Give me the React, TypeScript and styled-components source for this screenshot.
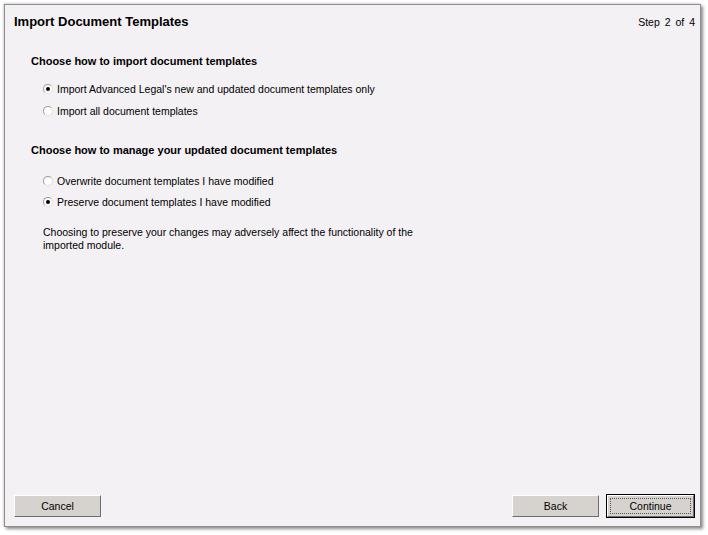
import React from 'react';
import styled, { createGlobalStyle } from 'styled-components';

const GlobalStyle = createGlobalStyle`
  html, body {
    margin: 0;
    padding: 0;
    background: #ffffff;
  }
  body {
    font-family: Tahoma, "Liberation Sans", "DejaVu Sans", sans-serif;
    font-size: 10.5px;
    color: #000000;
  }
`;

const Desktop = styled.div`
  width: 708px;
  height: 535px;
  padding: 4px 7px 8px 4px;
  box-sizing: border-box;
  background: #ffffff;
`;

const Window = styled.div`
  height: 100%;
  box-sizing: border-box;
  display: flex;
  flex-direction: column;
  background: #f4f1f4;
  border: 1px solid #8e8e8e;
  box-shadow: 2px 2px 3px rgba(0, 0, 0, 0.45), -1px -1px 2px rgba(0, 0, 0, 0.15);
`;

const Header = styled.div`
  display: flex;
  justify-content: space-between;
  align-items: flex-start;
  padding: 8px 5px 0 9px;
`;

const Title = styled.h1`
  margin: 0;
  font-size: 13px;
  font-weight: bold;
  line-height: 18px;
`;

const Step = styled.div`
  font-size: 10.5px;
  line-height: 14px;
  padding-top: 2px;
  word-spacing: 2px;
`;

const Body = styled.div`
  flex: 1;
  padding: 0 0 0 26px;
`;

const Section = styled.section<{ $top: number }>`
  margin-top: ${(p) => p.$top}px;
`;

const Heading = styled.h2<{ $gap: number }>`
  margin: 0 0 ${(p) => p.$gap}px;
  font-size: 11px;
  font-weight: bold;
  line-height: 14px;
`;

const Options = styled.div`
  display: flex;
  flex-direction: column;
  gap: 7.5px;
  padding-left: 12px;
`;

const Option = styled.label`
  display: flex;
  align-items: center;
  gap: 4px;
  line-height: 14px;
`;

const Radio = styled.span<{ $checked?: boolean }>`
  position: relative;
  width: 10px;
  height: 10px;
  border-radius: 50%;
  box-sizing: border-box;
  border: 1px solid #9a9a9a;
  border-right-color: #e0e0e0;
  border-bottom-color: #e0e0e0;
  background: #ffffff;
  &::after {
    content: '';
    display: ${(p) => (p.$checked ? 'block' : 'none')};
    position: absolute;
    left: 2px;
    top: 2px;
    width: 4px;
    height: 4px;
    border-radius: 50%;
    background: #000000;
  }
`;

const Note = styled.p`
  margin: 17px 0 0 12px;
  width: 375px;
  line-height: 13px;
`;

const Footer = styled.div`
  display: flex;
  align-items: center;
  padding: 0 6px 9px 9px;
`;

const Spacer = styled.div`
  flex: 1;
`;

const Button = styled.button<{ $default?: boolean }>`
  width: 87px;
  height: 22px;
  margin-left: ${(p) => (p.$default ? 8 : 0)}px;
  font-family: inherit;
  font-size: 10.5px;
  color: #000000;
  background: #d6d3ce;
  box-sizing: border-box;
  border: 1px solid #ffffff;
  border-right-color: #6e6e6e;
  border-bottom-color: #6e6e6e;
  box-shadow: ${(p) => (p.$default ? '0 0 0 1px #000000' : 'none')};
  outline: ${(p) => (p.$default ? '1px dotted #555555' : 'none')};
  outline-offset: -4px;
  padding: 0;
`;

export default function App() {
  return (
    <>
      <GlobalStyle />
      <Desktop>
        <Window>
          <Header>
            <Title>Import Document Templates</Title>
            <Step>Step 2 of 4</Step>
          </Header>
          <Body>
            <Section $top={23}>
              <Heading $gap={14}>Choose how to import document templates</Heading>
              <Options>
                <Option>
                  <Radio $checked />
                  Import Advanced Legal&apos;s new and updated document templates only
                </Option>
                <Option>
                  <Radio />
                  Import all document templates
                </Option>
              </Options>
            </Section>
            <Section $top={25}>
              <Heading $gap={17}>Choose how to manage your updated document templates</Heading>
              <Options>
                <Option>
                  <Radio />
                  Overwrite document templates I have modified
                </Option>
                <Option>
                  <Radio $checked />
                  Preserve document templates I have modified
                </Option>
              </Options>
              <Note>
                Choosing to preserve your changes may adversely affect the functionality of the
                imported module.
              </Note>
            </Section>
          </Body>
          <Footer>
            <Button>Cancel</Button>
            <Spacer />
            <Button>Back</Button>
            <Button $default>Continue</Button>
          </Footer>
        </Window>
      </Desktop>
    </>
  );
}
